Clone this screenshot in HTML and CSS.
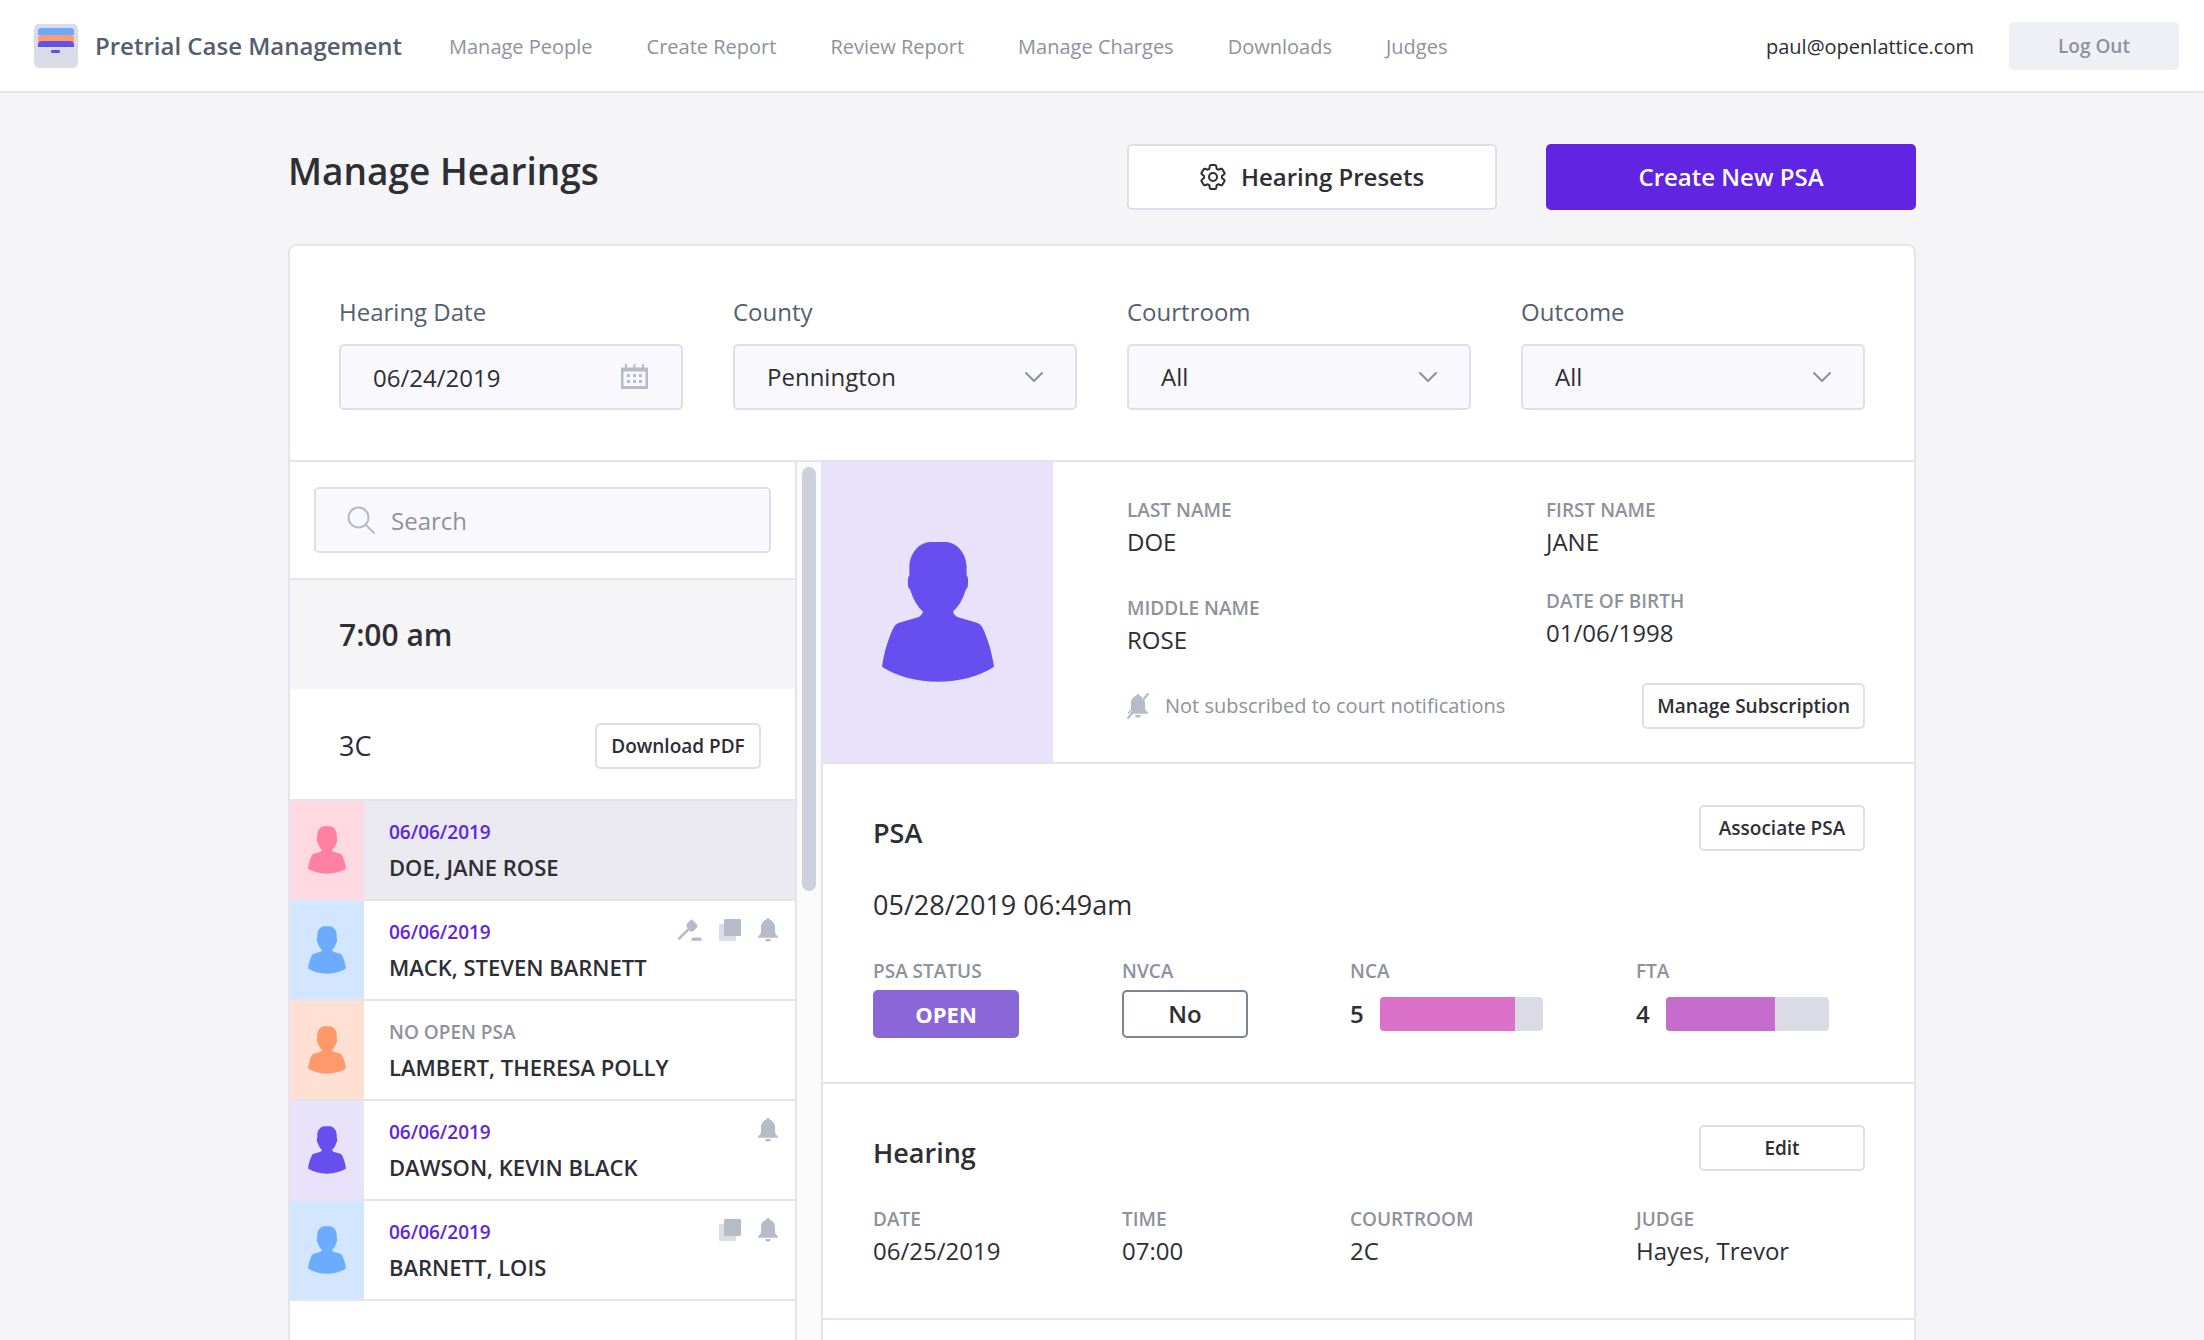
FILE: index.html
```html
<!DOCTYPE html>
<html lang="en">
<head>
<meta charset="utf-8">
<meta name="viewport" content="width=device-width, initial-scale=1">
<title>Pretrial Case Management</title>
<link rel="stylesheet" href="styles.css">
</head>
<body>
<svg class="sprite" aria-hidden="true">
  <symbol id="person" viewBox="0 0 112 140"><path d="M48 0h16C76 1 84 12 84.6 24v9.500c2 1 1.600 9 1 12-.8 1-1.400 1-2 3C81 57 77 64 71 69.700c1 3 2.500 4 4.200 5.300L95 80.700c3 1 4.500 3 5.500 5C106 97 110 111 112 124.700 97 134.500 77 139.700 56 139.700S15 134.500 0 124.700C2 111 6 97 11.500 85.700c1-2 2.500-4 5.500-5L36.800 75c1.700-1.300 3.200-2.300 4.200-5.300C35 64 31 57 28.400 48.500c-.6-2-1.200-2-2-3-.6-3-1-11 1-12V24C28 12 36 1 48 0z"/></symbol>
  <symbol id="bell" viewBox="0 0 20 24"><path d="M10 0c1 0 1.600.8 1.600 1.800C15 2.600 17 5.600 17 9v4c0 2.500.8 3.600 2.400 4.800.6.6.6 1.400.6 1.900H0c0-.5 0-1.300.6-1.900C2.200 16.600 3 15.500 3 13V9c0-3.400 2-6.400 5.400-7.200C8.400.8 9 0 10 0zM7 21h6c-.4 1.800-1.600 2.700-3 2.700S7.400 22.800 7 21z"/></symbol>
  <symbol id="copy" viewBox="0 0 22 22"><rect y="5" width="17" height="17" rx="1" fill="#dcdde4"/><rect x="5" width="17" height="17" rx="1"/></symbol>
  <symbol id="gavel" viewBox="0 0 24 22"><path d="M13.500 0l6.500 6.500-1.300.8.3 1.200-4 4-1.200-.3-1 1.100L8 7l1-1.200-.2-1 3.600-3.600.8.200zM10 9l1.800 1.800L2 20.600c-1 1-2.800-.6-1.800-1.800zM14.500 18.500h8l1.500 3.300H12.700z"/></symbol>
  <symbol id="chevron" viewBox="0 0 18 12"><path d="M1 2l8 8 8-8" fill="none" stroke="#8e929b" stroke-width="2" stroke-linecap="round" stroke-linejoin="round"/></symbol>
</svg>

<header class="topbar">
  <a class="brand" href="#">
    <svg width="44" height="44" viewBox="0 0 44 44" aria-hidden="true">
      <rect width="44" height="44" rx="5" fill="#dbdbe6"/>
      <path d="M4 11V7q0-3 3-3h30q3 0 3 3v4z" fill="#6caaff"/>
      <path d="M4 19v-5q0-3 3-3h30q3 0 3 3v5z" fill="#fe9b73"/>
      <path d="M4 23V21q0-4 4-4h28q4 0 4 4v2z" fill="#6153e4"/>
      <rect x="17" y="26" width="9" height="3" rx="1" fill="#6153e4"/>
    </svg>
    <span>Pretrial Case Management</span>
  </a>
  <nav class="nav" aria-label="Main">
    <a href="#">Manage People</a>
    <a href="#">Create Report</a>
    <a href="#">Review Report</a>
    <a href="#">Manage Charges</a>
    <a href="#">Downloads</a>
    <a href="#">Judges</a>
  </nav>
  <div class="account">
    <span class="email">paul@openlattice.com</span>
    <button class="logout" type="button">Log Out</button>
  </div>
</header>

<main class="page">
  <div class="page-head">
    <h1>Manage Hearings</h1>
    <div class="page-actions">
      <button class="action" type="button">
        <svg width="26" height="26" viewBox="0 0 26 26" fill="none" stroke="#2e2e34" stroke-width="2" stroke-linejoin="round" aria-hidden="true">
          <path d="M9.340 4.780L9.830 1.950Q10 1 11 1H15Q16 1 16.170 1.950L16.660 4.780L18.290 5.720L20.990 4.730Q22 4.500 22.500 5.400L24.400 8.800Q24.900 9.700 24.160 10.220L21.950 12.060V13.940L24.160 15.780Q24.900 16.300 24.400 17.200L22.500 20.600Q22 21.500 20.990 21.270L18.290 20.280L16.660 21.220L16.170 24.050Q16 25 15 25H11Q10 25 9.830 24.050L9.340 21.220L7.710 20.280L5.010 21.270Q4 21.500 3.500 20.600L1.600 17.200Q1.100 16.300 1.840 15.780L4.050 13.940V12.060L1.840 10.220Q1.100 9.700 1.600 8.800L3.500 5.400Q4 4.500 5.010 4.730L7.710 5.720Z"/>
          <circle cx="13" cy="13" r="4"/>
        </svg>
        <span>Hearing Presets</span>
      </button>
      <button class="action action-primary" type="button">Create New PSA</button>
    </div>
  </div>

  <section class="card">
    <form class="filters">
      <div class="filter">
        <label for="date">Hearing Date</label>
        <div class="control">
          <input id="date" type="text" value="06/24/2019">
          <svg width="28" height="26" viewBox="0 0 28 26" fill="#b6bbc8" aria-hidden="true"><path fill-rule="evenodd" d="M0 3.500h27V25H0zM2.500 7.500v14.500h22V7.500z"/><path d="M4 0h2v5H4zM12.500 0h2v5h-2zM21 0h2v5h-2zM6 10h3v3H6zM12 10h3v3h-3zM18 10h3v3h-3zM6 16h3v3H6zM12 16h3v3h-3zM18 16h3v3h-3z"/></svg>
        </div>
      </div>
      <div class="filter">
        <label for="county">County</label>
        <div class="control">
          <select id="county"><option>Pennington</option></select>
          <svg width="18" height="12" aria-hidden="true"><use href="#chevron"/></svg>
        </div>
      </div>
      <div class="filter">
        <label for="courtroom">Courtroom</label>
        <div class="control">
          <select id="courtroom"><option>All</option></select>
          <svg width="18" height="12" aria-hidden="true"><use href="#chevron"/></svg>
        </div>
      </div>
      <div class="filter">
        <label for="outcome">Outcome</label>
        <div class="control">
          <select id="outcome"><option>All</option></select>
          <svg width="18" height="12" aria-hidden="true"><use href="#chevron"/></svg>
        </div>
      </div>
    </form>

    <div class="columns">
      <div class="list">
        <div class="search">
          <div class="control search-control">
            <svg width="28" height="28" viewBox="0 0 28 28" fill="none" stroke="#b6bbc8" stroke-width="2" stroke-linecap="round" aria-hidden="true"><circle cx="11.500" cy="11.500" r="10"/><path d="M19 19l8 8"/></svg>
            <input type="search" placeholder="Search" aria-label="Search">
          </div>
        </div>
        <h2 class="time">7:00 am</h2>
        <div class="room">
          <h3>3C</h3>
          <button class="small-button" type="button">Download PDF</button>
        </div>
        <ul class="people">
          <li><a class="person selected" href="#">
            <span class="avatar pink"><svg width="38" height="48" aria-hidden="true"><use href="#person"/></svg></span>
            <span class="who"><span class="psa-date">06/06/2019</span><span class="name">DOE, JANE ROSE</span></span>
          </a></li>
          <li><a class="person" href="#">
            <span class="avatar blue"><svg width="38" height="48" aria-hidden="true"><use href="#person"/></svg></span>
            <span class="who"><span class="psa-date">06/06/2019</span><span class="name">MACK, STEVEN BARNETT</span></span>
            <span class="flags"><svg width="24" height="22"><use href="#gavel"/></svg><svg width="22" height="22"><use href="#copy"/></svg><svg width="20" height="24"><use href="#bell"/></svg></span>
          </a></li>
          <li><a class="person" href="#">
            <span class="avatar orange"><svg width="38" height="48" aria-hidden="true"><use href="#person"/></svg></span>
            <span class="who"><span class="psa-date none">NO OPEN PSA</span><span class="name">LAMBERT, THERESA POLLY</span></span>
          </a></li>
          <li><a class="person" href="#">
            <span class="avatar purple"><svg width="38" height="48" aria-hidden="true"><use href="#person"/></svg></span>
            <span class="who"><span class="psa-date">06/06/2019</span><span class="name">DAWSON, KEVIN BLACK</span></span>
            <span class="flags"><svg width="20" height="24"><use href="#bell"/></svg></span>
          </a></li>
          <li><a class="person" href="#">
            <span class="avatar blue"><svg width="38" height="48" aria-hidden="true"><use href="#person"/></svg></span>
            <span class="who"><span class="psa-date">06/06/2019</span><span class="name">BARNETT, LOIS</span></span>
            <span class="flags"><svg width="22" height="22"><use href="#copy"/></svg><svg width="20" height="24"><use href="#bell"/></svg></span>
          </a></li>
        </ul>
      </div>

      <div class="track"><div class="thumb"></div></div>

      <div class="detail">
        <section class="profile">
          <div class="photo purple"><svg width="112" height="140" aria-hidden="true"><use href="#person"/></svg></div>
          <div class="profile-body">
            <div class="names">
              <dl class="names-col">
                <div><dt>LAST NAME</dt><dd>DOE</dd></div>
                <div><dt>MIDDLE NAME</dt><dd>ROSE</dd></div>
              </dl>
              <dl class="names-col tight">
                <div><dt>FIRST NAME</dt><dd>JANE</dd></div>
                <div><dt>DATE OF BIRTH</dt><dd>01/06/1998</dd></div>
              </dl>
            </div>
            <div class="subscription">
              <p>
                <svg width="22" height="26" viewBox="0 0 22 26" fill="#b6bbc8" aria-hidden="true"><use href="#bell" x="1" y="1" width="20" height="24"/><path d="M0 23.500L5 17.800M15 6L20 .5" stroke="#fff" stroke-width="1"/><path d="M1 25L21 1" stroke="#b6bbc8" stroke-width="2" stroke-linecap="round"/></svg>
                <span>Not subscribed to court notifications</span>
              </p>
              <button class="small-button" type="button">Manage Subscription</button>
            </div>
          </div>
        </section>

        <section class="block">
          <div class="block-head">
            <h2>PSA</h2>
            <button class="small-button" type="button">Associate PSA</button>
          </div>
          <p class="timestamp">05/28/2019 06:49am</p>
          <dl class="facts scores">
            <div><dt>PSA STATUS</dt><dd><span class="badge badge-open">OPEN</span></dd></div>
            <div><dt>NVCA</dt><dd><span class="badge badge-outline">No</span></dd></div>
            <div><dt>NCA</dt><dd class="score">5<span class="bar"><span class="fill fill-pink" style="width: 83%"></span></span></dd></div>
            <div><dt>FTA</dt><dd class="score">4<span class="bar"><span class="fill fill-violet" style="width: 67%"></span></span></dd></div>
          </dl>
        </section>

        <section class="block block-tall">
          <div class="block-head">
            <h2>Hearing</h2>
            <button class="small-button" type="button">Edit</button>
          </div>
          <dl class="facts">
            <div><dt>DATE</dt><dd>06/25/2019</dd></div>
            <div><dt>TIME</dt><dd>07:00</dd></div>
            <div><dt>COURTROOM</dt><dd>2C</dd></div>
            <div><dt>JUDGE</dt><dd>Hayes, Trevor</dd></div>
          </dl>
        </section>
      </div>
    </div>
  </section>
</main>
</body>
</html>
```
FILE: styles.css
```css
* {
  box-sizing: border-box;
  margin: 0;
  padding: 0;
}

:root {
  --ink: #2e2e34;
  --slate: #555e6f;
  --muted: #8e929b;
  --line: #e4e4ec;
  --control-line: #dfdfe9;
  --icon: #b6bbc8;
  --accent: #6124e2;
}

body {
  display: flex;
  flex-direction: column;
  min-height: 100vh;
  background: #f5f5f8;
  color: var(--ink);
  font-family: "Open Sans", sans-serif;
  font-size: 24px;
  line-height: 32px;
}

button,
input,
select {
  font: inherit;
  color: inherit;
}

a {
  color: inherit;
  text-decoration: none;
}

svg {
  display: block;
  flex: none;
}

.sprite {
  position: absolute;
  width: 0;
  height: 0;
}

/* Top bar */

.topbar {
  display: flex;
  align-items: center;
  min-height: 93px;
  padding: 0 25px 0 34px;
  border-bottom: 2px solid #e6e6eb;
  background: #fff;
  font-size: 20px;
}

.brand {
  display: flex;
  align-items: center;
  gap: 17px;
  color: var(--slate);
  font-size: 24px;
  font-weight: 600;
}

.nav {
  display: flex;
  gap: 54px;
  margin-left: 47px;
  padding-top: 2px;
  color: var(--muted);
}

.account {
  display: flex;
  align-items: center;
  gap: 35px;
  margin-left: auto;
}

.email {
  padding-top: 2px;
}

.logout {
  width: 170px;
  height: 48px;
  border: 0;
  border-radius: 5px;
  background: #eff0f6;
  color: var(--muted);
  font-size: 19px;
  font-weight: 600;
}

/* Page heading */

.page {
  display: flex;
  flex: 1;
  flex-direction: column;
  width: 100%;
  max-width: 1628px;
  margin: 0 auto;
  padding-top: 51px;
}

.page-head {
  display: flex;
  justify-content: space-between;
  margin-bottom: 34px;
}

h1 {
  font-size: 37px;
  font-weight: 600;
  line-height: 54px;
}

.page-actions {
  display: flex;
  gap: 49px;
}

.action {
  display: flex;
  align-items: center;
  justify-content: center;
  gap: 15px;
  width: 370px;
  height: 66px;
  border: 2px solid var(--control-line);
  border-radius: 5px;
  background: #fff;
  font-weight: 600;
}

.action-primary {
  border-color: var(--accent);
  background: var(--accent);
  color: #fff;
}

/* Card and filters */

.card {
  display: flex;
  flex: 1;
  flex-direction: column;
  border: 2px solid var(--line);
  border-bottom: 0;
  border-radius: 8px 8px 0 0;
  background: #fff;
}

.filters {
  display: grid;
  grid-template-columns: repeat(4, minmax(0, 1fr));
  gap: 50px;
  padding: 50px 49px;
  border-bottom: 2px solid var(--line);
}

.filter {
  display: flex;
  flex-direction: column;
  gap: 16px;
  color: var(--slate);
}

.control {
  display: flex;
  align-items: center;
  height: 66px;
  padding-right: 32px;
  border: 2px solid var(--control-line);
  border-radius: 5px;
  background: #f9f9fd;
  color: var(--ink);
}

.control input,
.control select {
  flex: 1;
  min-width: 0;
  height: 100%;
  padding-left: 32px;
  border: 0;
  outline: 0;
  background: none;
  appearance: none;
}

/* The chevron sits over the select so that the whole box opens the menu */
.control select {
  margin-right: -50px;
  padding-right: 50px;
}

.control select + svg {
  margin-left: 32px;
  pointer-events: none;
}

/* Two panes */

.columns {
  display: grid;
  flex: 1;
  grid-template-columns: 507px 24px minmax(0, 1fr);
}

.list {
  border-right: 2px solid var(--line);
}

.search {
  padding: 25px 24px;
  border-bottom: 2px solid var(--line);
}

.search-control {
  padding-left: 31px;
}

.search-control input {
  padding-left: 16px;
}

.search-control input::placeholder {
  color: var(--muted);
  opacity: 1;
}

.time {
  padding: 34px 49px;
  background: #f5f5f8;
  font-size: 30px;
  font-weight: 600;
  line-height: 41px;
}

.room {
  display: flex;
  align-items: center;
  justify-content: space-between;
  padding: 34px 34px 30px 49px;
  border-bottom: 2px solid var(--line);
}

.room h3 {
  font-size: 27px;
  font-weight: 400;
}

.small-button {
  min-width: 166px;
  height: 46px;
  padding: 0 13px;
  border: 2px solid var(--control-line);
  border-radius: 5px;
  background: #fff;
  font-size: 19px;
  font-weight: 600;
}

.people {
  list-style: none;
}

.person {
  display: flex;
  height: 100px;
  border-bottom: 2px solid var(--line);
}

.selected {
  background: #e9e9ef;
}

.avatar {
  display: flex;
  align-items: center;
  justify-content: center;
  width: 74px;
}

.pink {
  background: #ffd9e1;
  fill: #ff80a0;
}

.blue {
  background: #d2e6ff;
  fill: #6cacff;
}

.orange {
  background: #ffe0d3;
  fill: #ff996b;
}

.purple {
  background: #e8e3fb;
  fill: #674fef;
}

.who {
  display: flex;
  flex: 1;
  flex-direction: column;
  gap: 8px;
  padding: 19px 0 0 25px;
}

.psa-date {
  color: var(--accent);
  font-size: 19px;
  font-weight: 600;
  line-height: 24px;
}

.none {
  color: var(--muted);
}

.name {
  font-size: 22px;
  font-weight: 600;
  line-height: 30px;
}

.flags {
  display: flex;
  gap: 17px;
  height: 24px;
  margin: 17px 17px 0 0;
  align-items: center;
  fill: var(--icon);
}

.track {
  padding: 5px;
  background: #fafafb;
}

.thumb {
  height: 424px;
  border-radius: 7px;
  background: #ccd0dc;
}

/* Person detail */

.detail {
  border-left: 2px solid var(--line);
}

.profile {
  display: flex;
  border-bottom: 2px solid var(--line);
}

.photo {
  display: flex;
  align-items: center;
  justify-content: center;
  width: 230px;
}

.profile-body {
  flex: 1;
  padding: 36px 49px 33px 74px;
}

.names {
  display: grid;
  grid-template-columns: 1fr 1fr;
  gap: 100px;
  margin-bottom: 27px;
}

.names-col {
  display: flex;
  flex-direction: column;
  gap: 38px;
}

.tight {
  gap: 31px;
}

dt {
  margin-bottom: 4px;
  color: var(--muted);
  font-size: 19px;
  font-weight: 600;
  line-height: 24px;
}

.subscription {
  display: flex;
  align-items: center;
  justify-content: space-between;
}

.subscription p {
  display: flex;
  align-items: center;
  gap: 16px;
  color: var(--muted);
  font-size: 20px;
}

.block {
  padding: 41px 49px 44px 50px;
  border-bottom: 2px solid var(--line);
}

.block-tall {
  padding-bottom: 51px;
}

.block-head {
  display: flex;
  align-items: flex-end;
  justify-content: space-between;
  margin-bottom: 36px;
}

.block-head h2,
.timestamp {
  font-size: 27px;
  font-weight: 600;
  line-height: 36px;
}

.timestamp {
  margin-bottom: 36px;
  font-weight: 400;
}

.facts {
  display: grid;
  grid-template-columns: 249fr 228fr 286fr 229fr;
}

.scores dt {
  margin-bottom: 7px;
}

.badge {
  display: flex;
  align-items: center;
  justify-content: center;
  height: 48px;
  border-radius: 5px;
}

.badge-open {
  width: 146px;
  background: #8b66d9;
  color: #fff;
  font-size: 22px;
  font-weight: 700;
}

.badge-outline {
  width: 126px;
  border: 2px solid #7b8494;
  font-weight: 600;
}

.score {
  display: flex;
  align-items: center;
  gap: 16px;
  height: 48px;
  font-weight: 600;
}

.bar {
  width: 163px;
  height: 34px;
  overflow: hidden;
  border-radius: 4px;
  background: #dbdbe5;
}

.fill {
  display: block;
  height: 100%;
}

.fill-pink {
  background: #dc71c9;
}

.fill-violet {
  background: #c66ccd;
}
```
